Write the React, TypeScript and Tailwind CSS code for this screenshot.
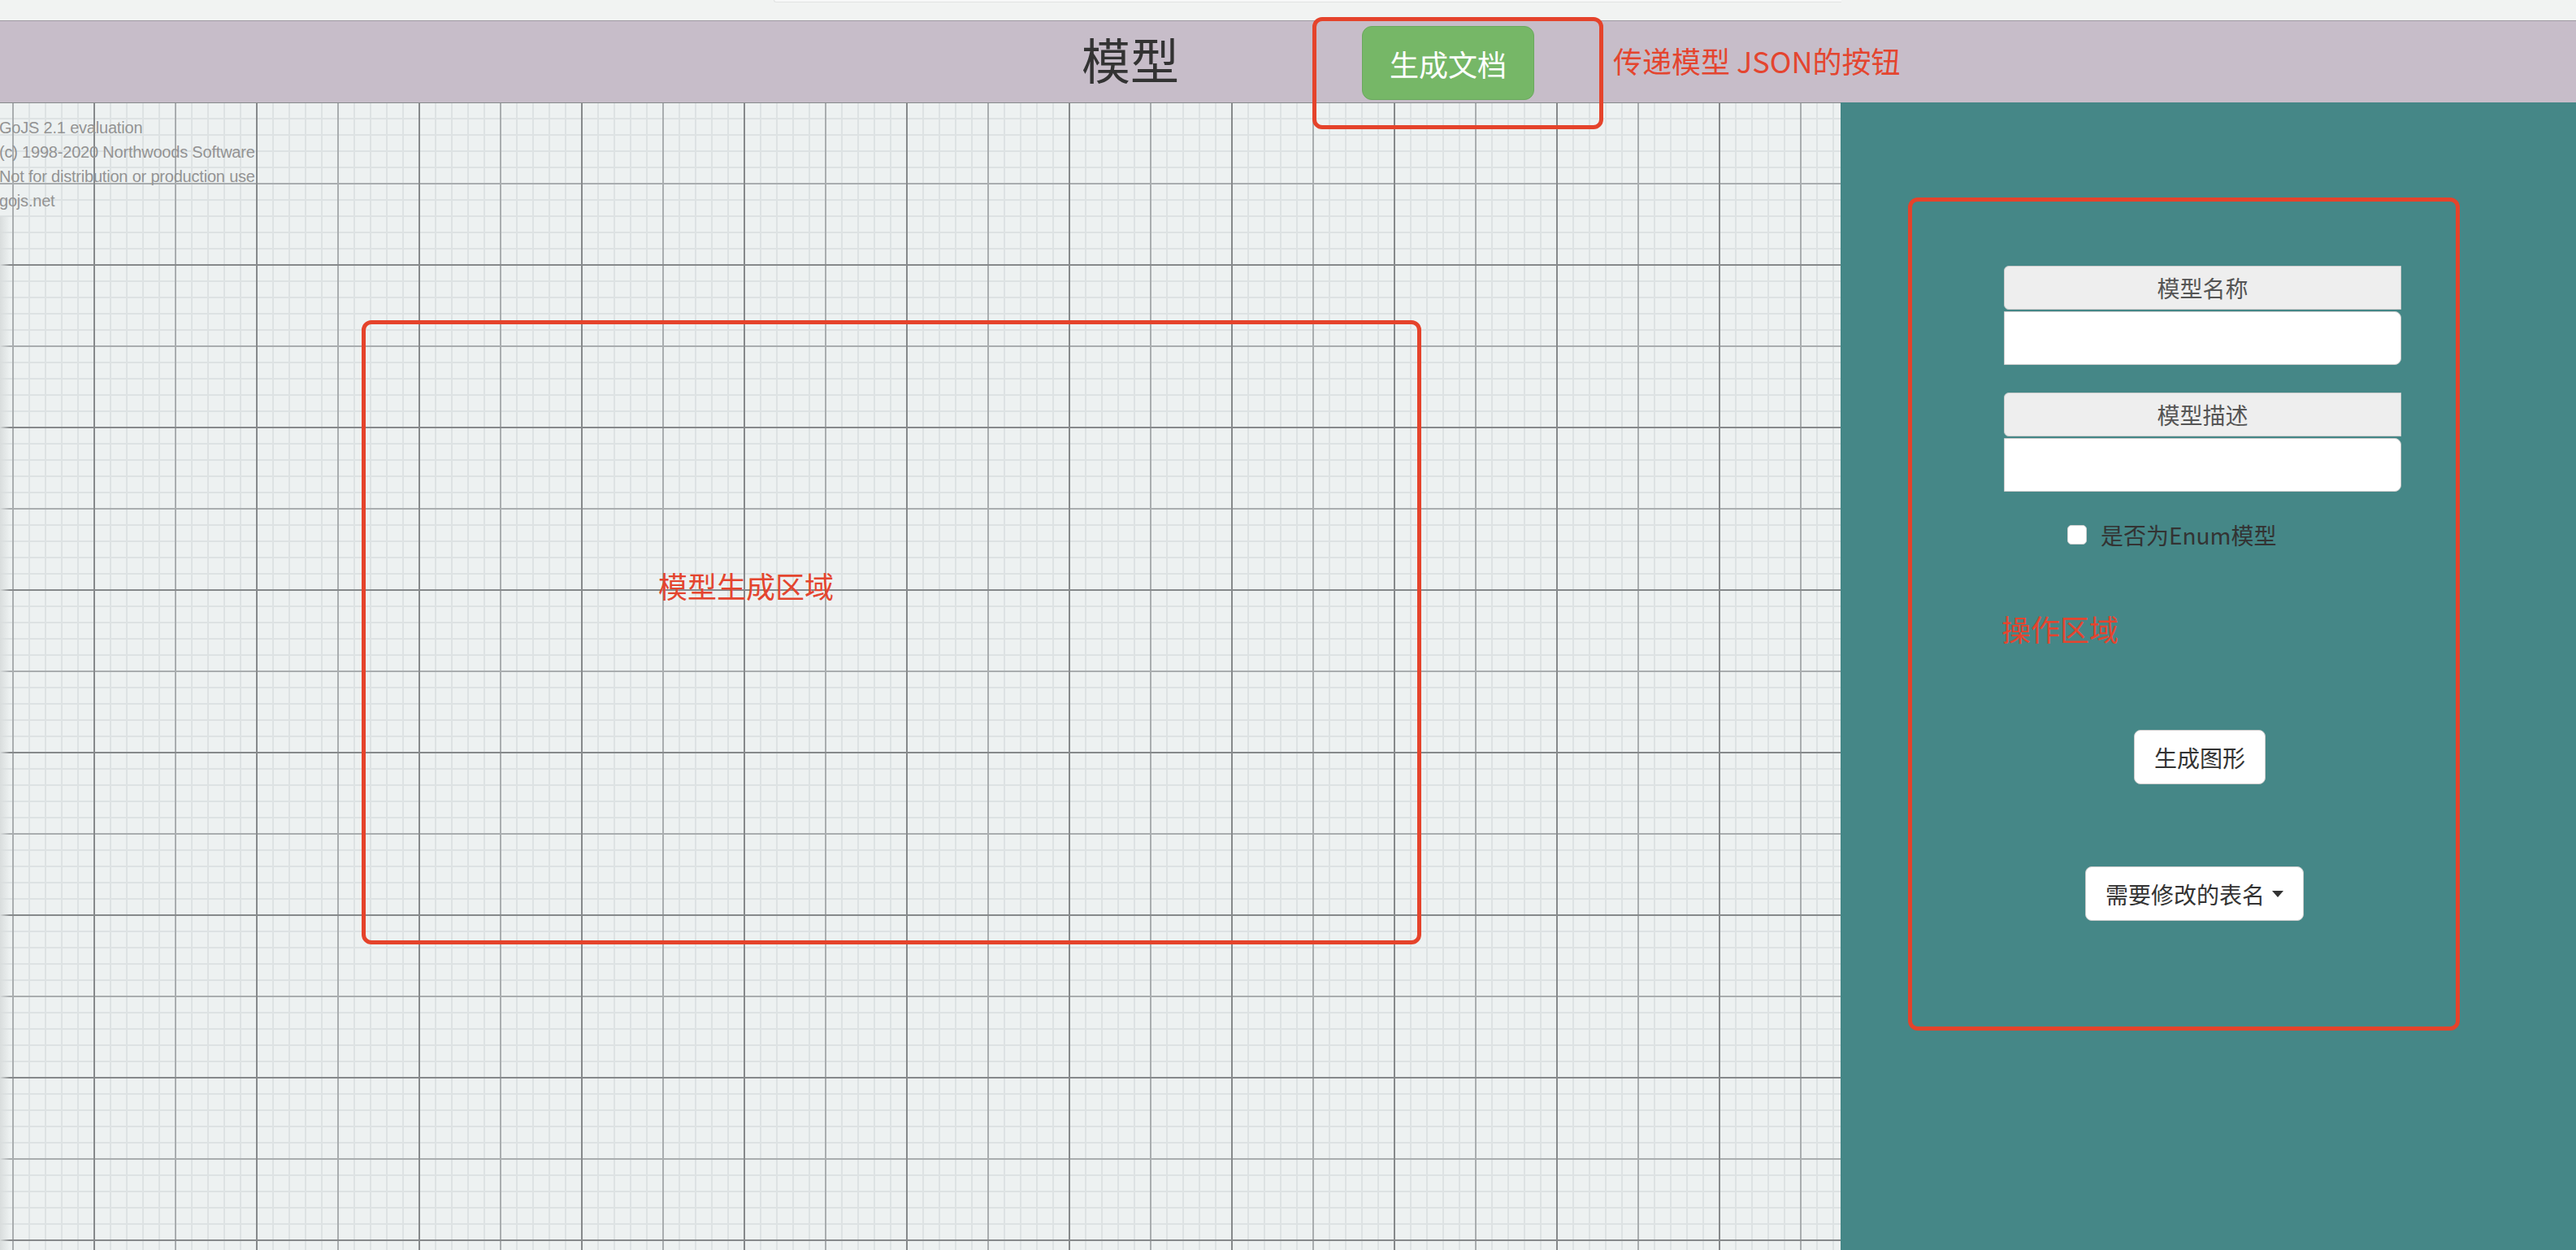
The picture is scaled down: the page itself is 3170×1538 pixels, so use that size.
import React from 'react';

const GridCanvas: React.FC = () => {
  const minor = [20, 40, 60, 80, 120, 140, 160, 180];
  return (
    <svg className="absolute inset-0 w-full h-full" xmlns="http://www.w3.org/2000/svg">
      <defs>
        <pattern id="gojs-grid" width="200" height="200" patternUnits="userSpaceOnUse" x="15" y="-1">
          <rect width="200" height="200" fill="#edf1f1" />
          {minor.map((p) => (
            <rect key={'v' + p} x={p} y={0} width={2} height={200} fill="#dde2e3" />
          ))}
          {minor.map((p) => (
            <rect key={'h' + p} x={0} y={p} width={200} height={2} fill="#dde2e3" />
          ))}
          <rect x={0} y={0} width={2} height={200} fill="#a9adaf" />
          <rect x={0} y={100} width={200} height={2} fill="#a9adaf" />
          <rect x={100} y={0} width={2} height={200} fill="#86898b" />
          <rect x={0} y={0} width={200} height={2} fill="#86898b" />
        </pattern>
      </defs>
      <rect width="100%" height="100%" fill="url(#gojs-grid)" />
    </svg>
  );
};

const FieldGroup: React.FC<{ label: string; first?: boolean }> = ({ label, first }) => (
  <div className={first ? 'flex flex-col' : 'flex flex-col mt-[34px]'}>
    <div className="h-[54px] flex items-center justify-center bg-[#eeeeee] border border-[#cccccc] rounded-l-[6px] text-[28px] text-[#555555]">
      {label}
    </div>
    <div className="mt-[2px] h-[66px] bg-white border border-[#cccccc] rounded-r-[8px]" />
  </div>
);

const App: React.FC = () => {
  return (
    <div className="relative w-[3170px] h-[1538px] overflow-hidden bg-[#f1f3f2] font-['Noto_Sans_CJK_SC',sans-serif]">
      {/* browser strip */}
      <div className="h-[26px] border-b border-[#9f99a2] bg-[#f1f3f2]">
        <div className="ml-[952px] w-[1314px] h-[3px] bg-[#f7f8f8] border-b border-l border-[#e1e3e2] rounded-bl-[4px]" />
      </div>

      {/* header */}
      <header className="h-[100px] bg-[#c7bdc9] flex items-center">
        <h1 className="ml-[1331px] text-[60px] leading-none font-normal text-[#333333] -mt-[8px]">模型</h1>
        <button className="ml-[225px] mt-[3px] w-[212px] h-[91px] rounded-[12px] bg-[#76b767] border border-[#6aa95d] text-white text-[36px] leading-none">
          生成文档
        </button>
        <span className="ml-[97px] -mt-[4px] text-[36px] leading-none text-[#e4452f]">传递模型 JSON的按钮</span>
      </header>

      <div className="flex h-[1412px]">
        {/* diagram canvas */}
        <div className="relative flex-1 overflow-hidden">
          <GridCanvas />
          <div className="absolute left-0 top-[140px] bottom-0 w-[12px] bg-gradient-to-r from-[#d9dddd] to-transparent" />
          <div className="absolute left-[-1px] top-[16px] text-[20px] leading-[30px] text-[#939393] font-['Liberation_Sans',Arial,sans-serif] tracking-[-0.2px]">
            <div>GoJS 2.1 evaluation</div>
            <div>(c) 1998-2020 Northwoods Software</div>
            <div>Not for distribution or production use</div>
            <div>gojs.net</div>
          </div>
          <div className="absolute left-[445px] top-[268px] w-[1304px] h-[768px] border-[5px] border-[#e5432b] rounded-[12px] pl-[360px] pt-[299px]">
            <span className="text-[36px] leading-[44px] text-[#e4452f]">模型生成区域</span>
          </div>
        </div>

        {/* operation panel */}
        <aside className="w-[905px] bg-[#458787] pl-[83px] pt-[117px]">
          <div className="w-[679px] h-[1025px] border-[5px] border-[#e5432b] rounded-[12px]">
            <div className="ml-[113px] w-[489px] pt-[79px] flex flex-col">
              <FieldGroup label="模型名称" first />
              <FieldGroup label="模型描述" />

              <label className="mt-[40px] ml-[78px] flex items-center h-[26px]">
                <span className="w-[24px] h-[24px] bg-white rounded-[5px] border border-[#d0d0d0]" />
                <span className="ml-[17px] text-[28px] leading-none text-[#333333]">是否为Enum模型</span>
              </label>

              <div className="mt-[80px] -ml-[3px] text-[36px] leading-[44px] text-[#e4452f]">操作区域</div>

              <button className="mt-[103px] ml-[160px] w-[162px] h-[67px] bg-white border border-[#cccccc] rounded-[8px] text-[28px] text-[#333333] leading-none">
                生成图形
              </button>

              <button className="mt-[101px] ml-[100px] w-[269px] h-[67px] bg-white border border-[#cccccc] rounded-[8px] text-[28px] text-[#333333] leading-none flex items-center justify-center">
                <span>需要修改的表名</span>
                <span className="ml-[9px] w-0 h-0 border-x-[7px] border-x-transparent border-t-[8px] border-t-[#333333]" />
              </button>
            </div>
          </div>
        </aside>
      </div>

      {/* annotation around the JSON button */}
      <div className="absolute left-[1615px] top-[21px] w-[358px] h-[138px] border-[5px] border-[#e5432b] rounded-[12px]" />
    </div>
  );
};

export default App;
